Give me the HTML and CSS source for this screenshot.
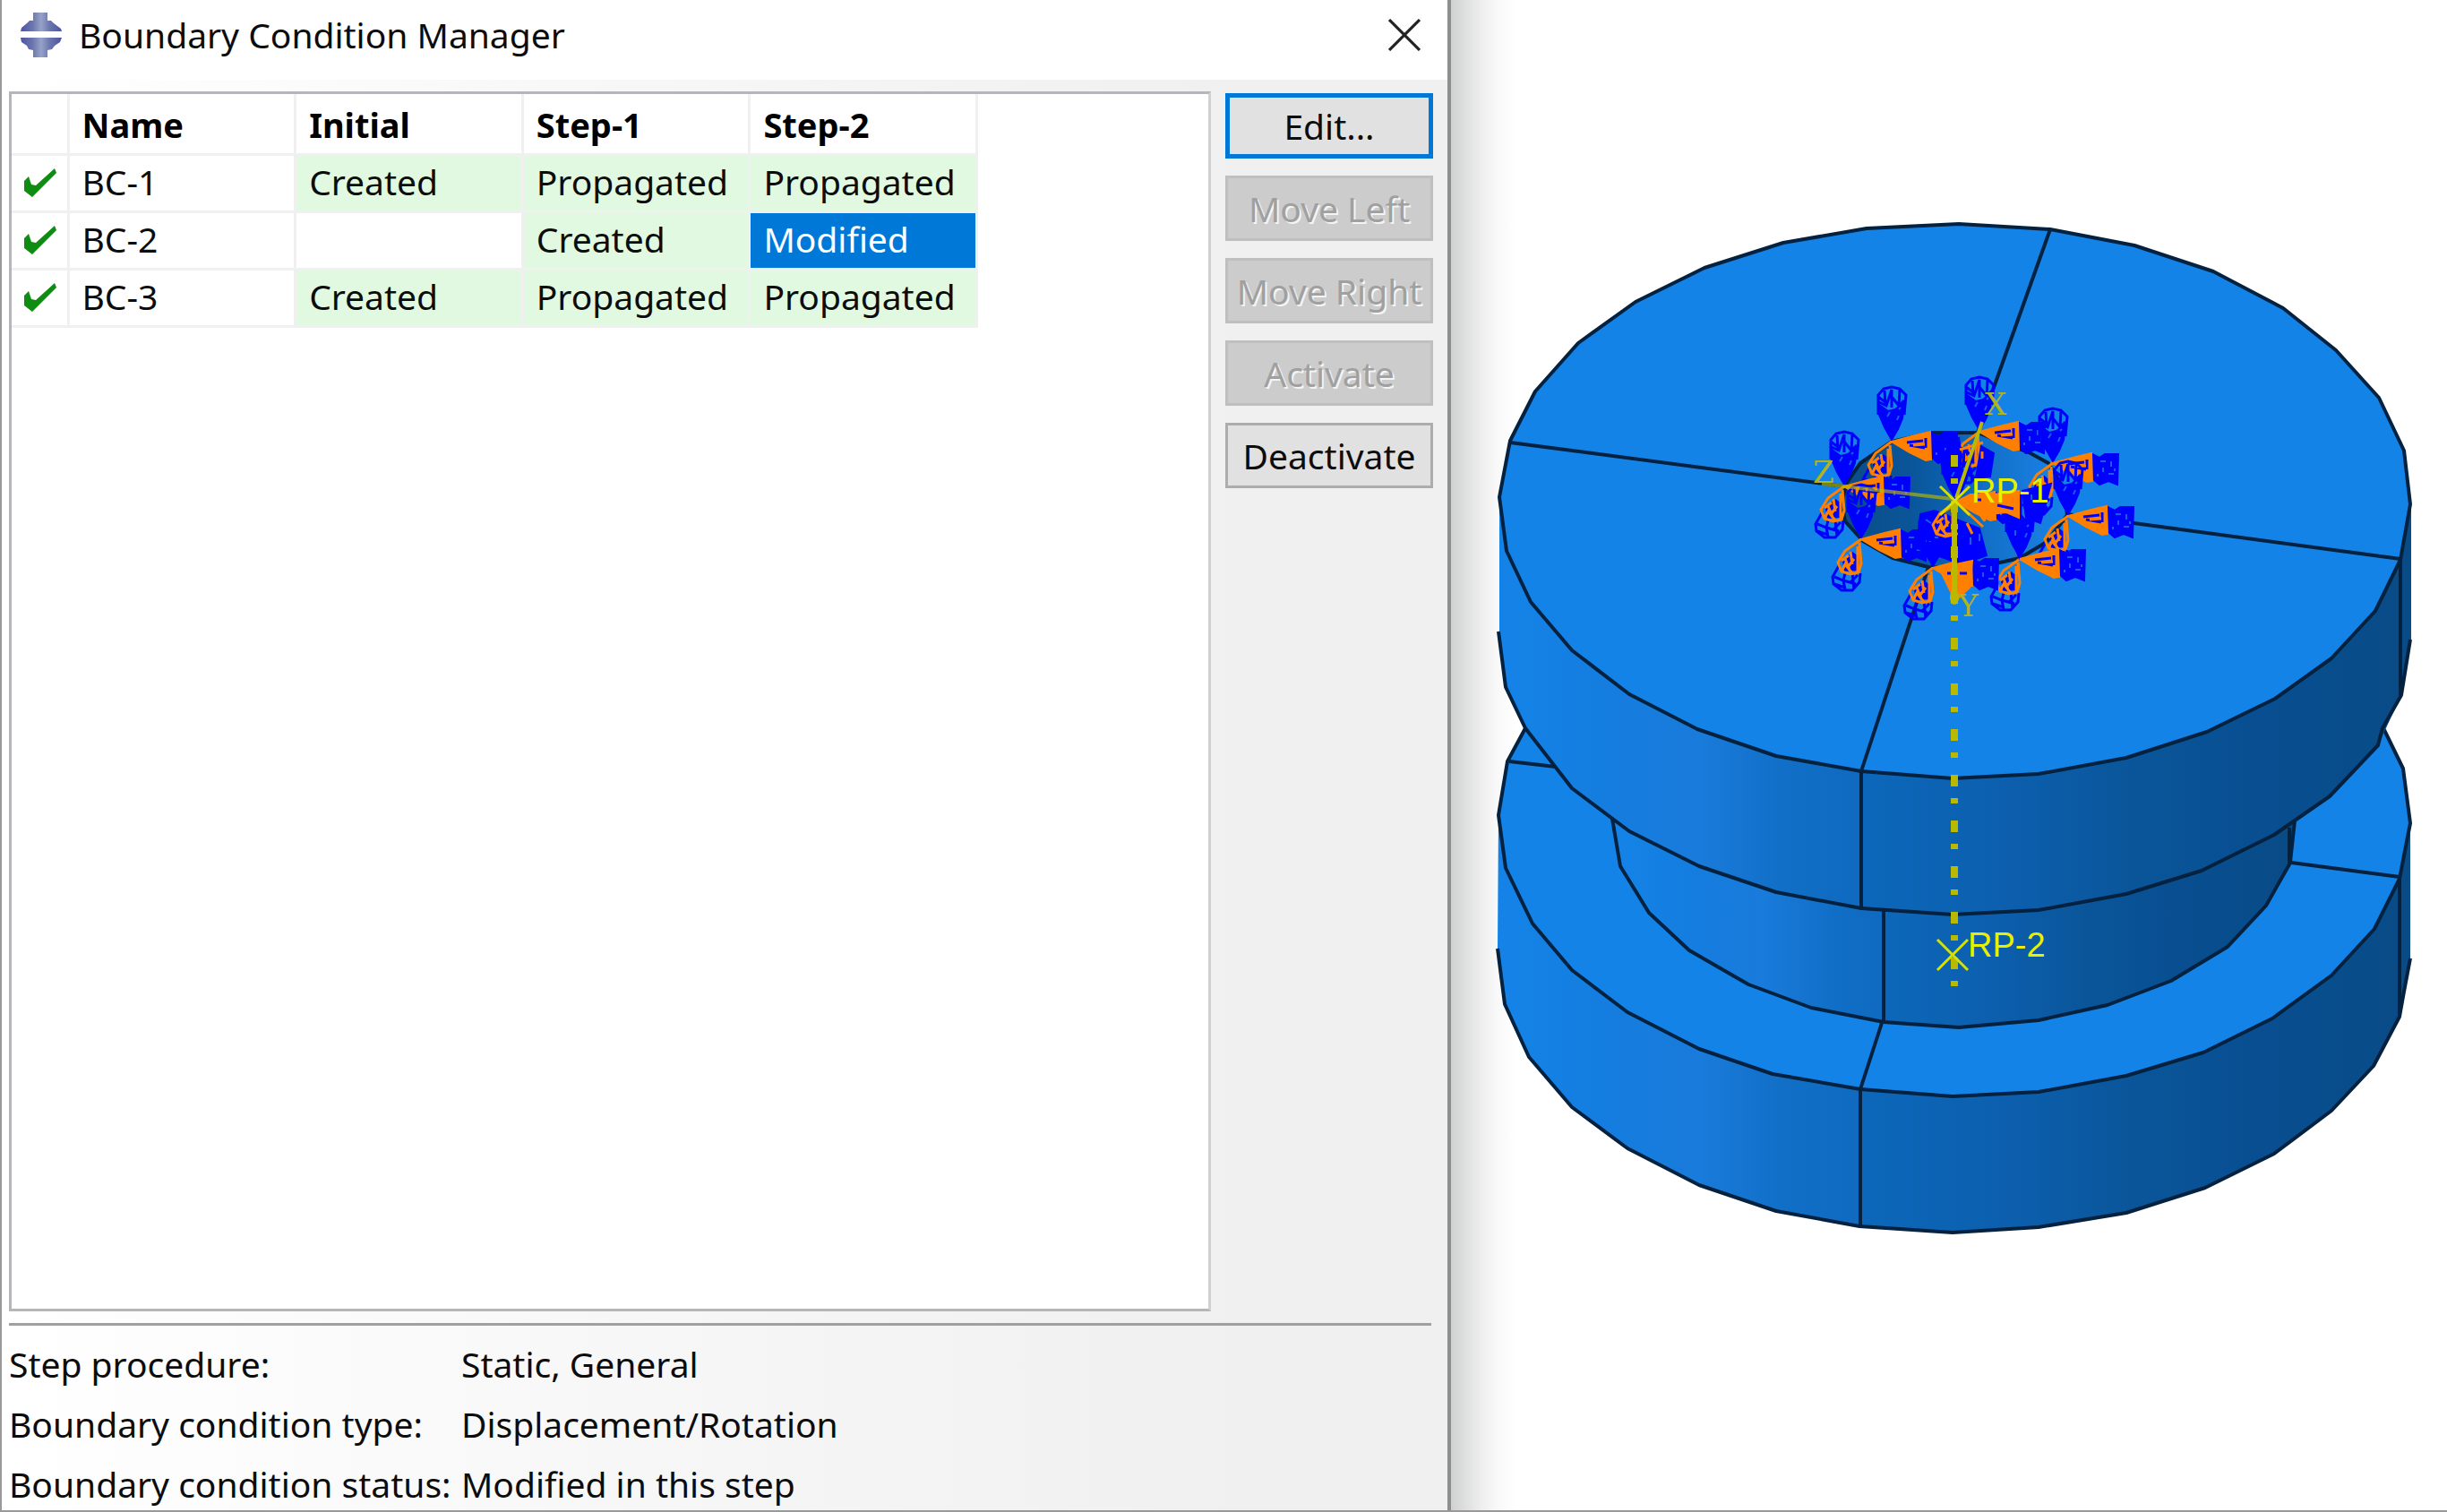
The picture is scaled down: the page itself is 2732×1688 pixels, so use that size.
FILE: index.html
```html
<!DOCTYPE html>
<html lang="en">
<head>
<meta charset="utf-8">
<title>Boundary Condition Manager</title>
<link rel="stylesheet" href="styles.css">
</head>
<body>
<main class="workspace">
  <section class="dialog" aria-labelledby="dialog-title">
    <header class="titlebar">
      <svg class="app-icon" viewBox="0 0 48 52" aria-hidden="true">
        <defs>
          <linearGradient id="icon-fill" x1="0" x2="1" y1="0" y2="0">
            <stop offset="0" stop-color="#4c54a0"/><stop offset=".3" stop-color="#6c77b0"/><stop offset=".5" stop-color="#97a2c8"/><stop offset=".7" stop-color="#6c77b0"/><stop offset="1" stop-color="#4c54a0"/>
          </linearGradient>
        </defs>
        <path fill="url(#icon-fill)" d="M1 22 2 18 8 13 11 10H15V1H31V10H35L38 13 46 19 47 22ZM1 29H47L45 34 39 38 36 42 31 43V51H15V43L10 42 8 38 2 34Z"/>
      </svg>
      <h1 class="title" id="dialog-title">Boundary Condition Manager</h1>
      <button class="close" type="button" aria-label="Close">
        <svg class="close-icon" viewBox="0 0 34 34" aria-hidden="true"><path d="M1 1 33 33M33 1 1 33"/></svg>
      </button>
    </header>

    <div class="content">
      <div class="list">
        <table class="grid">
          <colgroup><col class="col-check"><col class="col-data"><col class="col-data"><col class="col-data"><col class="col-data"></colgroup>
          <thead>
            <tr><th></th><th scope="col">Name</th><th scope="col">Initial</th><th scope="col">Step-1</th><th scope="col">Step-2</th></tr>
          </thead>
          <tbody>
            <tr>
              <td class="state"><svg class="check" viewBox="0 0 36 32" role="img" aria-label="Active"><path d="M0 14 5 9 8 18 13 19 34 0 36 5 9 32 0 25Z"/></svg></td>
              <td>BC-1</td><td class="set">Created</td><td class="set">Propagated</td><td class="set">Propagated</td>
            </tr>
            <tr>
              <td class="state"><svg class="check" viewBox="0 0 36 32" role="img" aria-label="Active"><path d="M0 14 5 9 8 18 13 19 34 0 36 5 9 32 0 25Z"/></svg></td>
              <td>BC-2</td><td></td><td class="set">Created</td><td class="selected">Modified</td>
            </tr>
            <tr>
              <td class="state"><svg class="check" viewBox="0 0 36 32" role="img" aria-label="Active"><path d="M0 14 5 9 8 18 13 19 34 0 36 5 9 32 0 25Z"/></svg></td>
              <td>BC-3</td><td class="set">Created</td><td class="set">Propagated</td><td class="set">Propagated</td>
            </tr>
          </tbody>
        </table>
      </div>
      <div class="actions">
        <button class="action primary" type="button">Edit...</button>
        <button class="action" type="button" disabled>Move Left</button>
        <button class="action" type="button" disabled>Move Right</button>
        <button class="action" type="button" disabled>Activate</button>
        <button class="action" type="button">Deactivate</button>
      </div>
    </div>

    <dl class="details">
      <dt>Step procedure:</dt><dd>Static, General</dd>
      <dt>Boundary condition type:</dt><dd>Displacement/Rotation</dd>
      <dt>Boundary condition status:</dt><dd>Modified in this step</dd>
    </dl>
  </section>

  <section class="viewport" aria-label="Model viewport">
    <svg class="model" viewBox="1620 0 1112 1680" role="img" aria-label="Flanged cylinder with boundary conditions">
      <defs>
        <linearGradient id="side" gradientUnits="userSpaceOnUse" x1="1672" x2="2692" y1="0" y2="0">
          <stop offset="0" stop-color="#1483e8"/><stop offset=".12" stop-color="#147ddf"/><stop offset=".22" stop-color="#197bdb"/><stop offset=".31" stop-color="#116fc7"/><stop offset=".397" stop-color="#0f6ac0"/><stop offset=".4" stop-color="#0c67ba"/><stop offset=".56" stop-color="#0c5fae"/><stop offset=".7" stop-color="#0a5599"/><stop offset=".82" stop-color="#084f92"/><stop offset="1" stop-color="#084b86"/>
        </linearGradient>
        <linearGradient id="neck" gradientUnits="userSpaceOnUse" x1="1800" x2="2562" y1="0" y2="0">
          <stop offset="0" stop-color="#1483e8"/><stop offset=".12" stop-color="#147ddf"/><stop offset=".22" stop-color="#197bdb"/><stop offset=".32" stop-color="#116fc7"/><stop offset=".397" stop-color="#0f6ac0"/><stop offset=".4" stop-color="#0c67ba"/><stop offset=".56" stop-color="#0c5fae"/><stop offset=".7" stop-color="#0a5599"/><stop offset=".82" stop-color="#084f92"/><stop offset="1" stop-color="#084b86"/>
        </linearGradient>
        <linearGradient id="bore" gradientUnits="userSpaceOnUse" x1="2056" x2="2308" y1="0" y2="0">
          <stop offset="0" stop-color="#0a4c88"/><stop offset=".3" stop-color="#0a5599"/><stop offset=".5" stop-color="#0c62b2"/><stop offset=".65" stop-color="#1270c8"/><stop offset=".85" stop-color="#187bdb"/><stop offset="1" stop-color="#1483e8"/>
        </linearGradient>
        <!-- translation cone, wireframe body pointing at its node -->
        <g id="up">
          <path class="blue-fill" d="M0 -2-8 -16-14 -30-15 -42-4 -34 4 -36 14 -44 12 -26 7 -14Z"/>
          <path class="blue-line" d="M-15 -30V-52L-9 -59 0 -61 9 -59 16 -52 14 -30M-14 -44-6 -40 0 -58V-38M0 -50 8 -40 14 -46M-8 -57-7 -42M-15 -50-7 -44M9 -58 8 -40"/>
          <path class="gap-line" d="M-5 -28-2 -33M6 -24 8 -29M8 -36 10 -38"/>
        </g>
        <g id="side-cone">
          <path class="blue-fill" d="M44 -10 52 -6 58 -10H73L72 24 62 20 52 24 44 17Z"/>
          <path class="gap-line" d="M53 -2H59M56 5V10M65 -2V4M62 12H68M50 12V15M69 6V9"/>
          <path class="orange-fill" d="M0 0 26 -7 43 -11 44 20 38 21 20 12Z"/>
          <path class="blue-line" d="M17 1 35 -1M20 4 37 7M28 4 37 5M38 -4V7"/>
          <path class="orange-line" d="M24 4 37 3"/>
        </g>
        <g id="down-cone">
          <path class="blue-line" d="M-24 28-32 42-31 50-22 57-10 57-2 48-1 38M-30 42-20 46-18 56M-20 46-6 50M-18 38-20 46M-10 38-8 56M-30 50-18 54M-4 40-12 48"/>
          <path class="blue-fill" d="M-20 25-10 15-6 18V34L-18 35Z"/>
          <path class="orange-line" d="M0 0-18 13-26 26-22 36-12 39-3 37 0 27-2 4M-4 8V36M-12 14-10 28M-18 22-13 34M-22 24-14 18M-10 38-18 28-22 36M-14 30-8 22"/>
        </g>
        <g id="bc"><use href="#up"/><use href="#side-cone"/><use href="#down-cone"/></g>
      </defs>

      <!-- lower flange -->
      <path fill="url(#side)" d="M1673 910 1672 1059 1680 1121 1707 1180 1755 1236 1817 1282 1897 1323 1983 1352 2076 1369 2180 1376 2276 1370 2374 1354 2462 1326 2539 1288 2603 1240 2650 1190 2679 1135 2684 1107 2691 1070V919Z"/>
      <path class="line" d="M1672 1059 1680 1121 1707 1180 1755 1236 1817 1282 1897 1323 1983 1352 2076 1369 2180 1376 2276 1370 2374 1354 2462 1326 2539 1288 2603 1240 2650 1190 2679 1135 2684 1107 2691 1070"/>
      <path class="line face" d="M1703 813 1683 850 1673 910 1681 969 1711 1031 1755 1083 1817 1130 1897 1171 1979 1199 2077 1216 2180 1224 2276 1219 2374 1201 2460 1175 2537 1137 2603 1089 2651 1037 2679 981 2691 919 2683 858 2662 815Z"/>
      <path class="line" d="M2679 981V1135M2077 1216V1369M2101 1142 2077 1216M1685 850 1737 856M2558 963 2679 979"/>
      <!-- neck -->
      <path fill="url(#neck)" d="M1800 900V914L1809 967 1841 1019 1886 1061 1952 1099 2022 1125 2103 1141 2187 1147 2276 1139 2353 1122 2424 1095 2487 1057 2530 1011 2556 965 2562 900Z"/>
      <path class="line" d="M1800 914 1809 967 1841 1019 1886 1061 1952 1099 2022 1125 2103 1141 2187 1147 2276 1139 2353 1122 2424 1095 2487 1057 2530 1011 2556 965V924M2562 916 2557 962M2103 1016V1141"/>
      <!-- upper flange -->
      <path fill="url(#side)" d="M1674 555V705L1681 767 1703 813 1755 880 1819 928 1897 967 1983 996 2078 1014 2180 1021 2276 1016 2374 998 2458 972 2539 932 2601 889 2655 832 2681 776 2692 714V563Z"/>
      <path class="line" d="M1673 705 1681 767 1703 813 1755 880 1819 928 1897 967 1983 996 2078 1014 2180 1021 2276 1016 2374 998 2458 972 2539 932 2601 889 2655 832 2660 813 2681 776 2691 714M2680 625V776M2078 861V1014"/>
      <path class="line face" d="M2187 250 2084 255 1991 271 1903 299 1826 337 1762 383 1714 437 1686 492 1674 555 1682 615 1709 672 1755 726 1819 775 1895 814 1983 844 2078 861 2180 869 2276 864 2374 846 2464 817 2540 780 2603 735 2652 682 2680 625 2691 563 2684 503 2656 444 2608 391 2549 344 2471 303 2383 274 2289 256Z"/>
      <path class="line" d="M2289 256 2208 483M1686 494 2059 543M2308 574 2680 624M2078 861 2153 633"/>
      <path class="line bore" d="M2157 483H2208L2267 506 2287 517 2304 545 2308 575 2285 605 2255 623 2233 628 2193 635 2153 633 2113 623 2080 604 2060 582 2056 560 2063 537 2077 517 2112 493Z"/>

      <!-- boundary condition glyphs on the bore edge -->
      <use href="#bc" x="2210" y="482"/>
      <use href="#bc" x="2112" y="493"/>
      <use href="#bc" x="2292" y="517"/>
      <use href="#bc" x="2059" y="543"/>
      <use href="#bc" x="2309" y="576"/>
      <use href="#bc" x="2078" y="602"/>
      <use href="#bc" x="2255" y="624"/>
      <use href="#bc" x="2158" y="634"/>
      <path class="blue-fill" d="M2158 486 2187 489 2190 510 2184 556 2170 530 2166 510ZM2212 498 2226 506 2222 532 2206 534ZM2144 574 2160 570 2210 590 2218 620 2190 630 2140 612ZM2258 548 2290 540 2278 584 2262 578ZM2240 585 2262 580 2254 622Z"/>
      <path class="gap-line" d="M2150 580 2156 584M2160 600H2166M2172 592 2176 598M2200 600V608M2210 596V604M2150 604H2156M2176 614 2182 612M2268 552V558M2250 592V598M2172 500V506"/>
      <use href="#bc" x="2184" y="560"/>
      <path class="orange-fill" d="M2184 560 2200 552 2226 552 2254 548 2254 578 2240 572 2222 574 2214 580 2206 568 2194 566Z"/>
      <path class="blue-line" d="M2230 564 2248 568M2206 558H2212"/>
      <path class="orange-line" d="M2186 560 2222 548M2190 566 2214 588M2208 560 2216 582M2196 584 2202 596M2172 596H2186M2180 565 2166 574M2206 508V516M2213 504V512M2214 494 2188 502"/>
      <path class="orange-fill" d="M2165 634 2202 626 2199 656 2183 671Z"/>
      <path class="blue-line" d="M2174 640H2180M2188 640H2196"/>

      <!-- local axes, centre line and reference points -->
      <path class="centre" d="M2182 508V1101"/>
      <path class="axis faded" d="M2034 540 2180 557"/>
      <path class="axis thin" d="M2184 556 2213 471"/>
      <path class="axis" d="M2182 560V666"/>
      <ellipse class="dot" cx="2182" cy="667" rx="5" ry="8"/>
      <path class="cross" d="M2166 543 2199 575M2199 543 2166 575M2163 1049 2197 1083M2197 1049 2163 1083"/>
      <text class="axis-name" x="2216" y="463">X</text>
      <text class="axis-name" x="2024" y="539">Z</text>
      <text class="axis-name" x="2186" y="688">Y</text>
      <text class="point-name" x="2201" y="561">RP-1</text>
      <text class="point-name" x="2197" y="1068">RP-2</text>
    </svg>
  </section>
</main>
</body>
</html>
```
FILE: styles.css
```css
* {
  box-sizing: border-box;
}

body {
  margin: 0;
  background: #fff;
  color: #0c0c0c;
  font: 39px/48px "Noto Sans", "Noto Sans CJK SC", sans-serif;
}

.workspace {
  display: grid;
  grid-template-columns: 1620fr 1112fr;
  min-height: 100vh;
  border-bottom: 2px solid #999;
}

/* Dialog window */

.dialog {
  display: flex;
  flex-direction: column;
  border-left: 2px solid #999;
  border-right: 4px solid #8e8e8e;
  background: linear-gradient(90deg, #fff, #f4f4f4 60%, #f0f0f0 85%);
}

.titlebar {
  display: flex;
  align-items: center;
  height: 89px;
  padding: 0 30px 12px 20px;
  background: #fff;
}

.app-icon {
  width: 48px;
  height: 52px;
}

.title {
  flex: 1;
  margin: 0 0 0 18px;
  font-size: 39px;
  font-weight: 400;
}

.close {
  display: flex;
  padding: 0;
  border: 0;
  background: none;
}

.close-icon {
  width: 36px;
  height: 36px;
  fill: none;
  stroke: #222;
  stroke-width: 3;
}

.content {
  flex: 1;
  display: grid;
  grid-template-columns: 1fr 232px;
  gap: 16px;
  padding: 13px 16px 0 8px;
}

.list {
  border: 3px solid #b4b6b9;
  border-right-color: #cfd1d3;
  background: #fff;
}

.grid {
  width: 1079px;
  table-layout: fixed;
  border-collapse: collapse;
}

.col-check {
  width: 63px;
}

th,
td {
  height: 64px;
  padding: 0 0 2px 14px;
  border-right: 3px solid #f0f0f0;
  border-bottom: 3px solid #f0f0f0;
  text-align: left;
  white-space: nowrap;
}

th {
  height: 67px;
  padding-top: 4px;
  font-size: 38px;
  font-weight: 700;
  color: #000;
}

.state {
  padding: 0 0 0 14px;
}

.check {
  display: block;
  width: 36px;
  height: 32px;
  fill: #0f8c12;
}

.set {
  background: #e1f9e1;
}

.selected {
  background: #0078d7;
  color: #fff;
}

.actions {
  display: flex;
  flex-direction: column;
  gap: 19px;
  padding-top: 2px;
}

.action {
  height: 73px;
  padding: 0;
  border: 3px solid #adadad;
  background: #e1e1e1;
  color: inherit;
  font: inherit;
  white-space: nowrap;
}

.action.primary {
  border: 5px solid #0078d7;
}

.action:disabled {
  border-color: #bfbfbf;
  background: #ccc;
  color: #a0a0a0;
  text-shadow: 2px 2px 0 #f4f4f4;
}

/* Step details */

.details {
  display: grid;
  grid-template-columns: 505px 1fr;
  row-gap: 19px;
  margin: 13px 18px 0 8px;
  padding: 19px 0 5px;
  border-top: 3px solid #a0a0a0;
  white-space: nowrap;
}

.details dd {
  margin: 0;
}

/* 3D viewport */

.viewport {
  background: linear-gradient(90deg, #cfd0d0, #e0e1e1 18px, #eee 34px, #f8f8f8 50px, #fff 72px);
}

.model {
  display: block;
  width: 100%;
  height: auto;
}

.line {
  fill: none;
  stroke: #04223f;
  stroke-width: 4;
  stroke-linejoin: round;
}

.face {
  fill: #1483e8;
}

.bore {
  fill: url(#bore);
}

.blue-fill {
  fill: #00f;
  stroke: #00f;
  stroke-width: 2;
}

.blue-line {
  fill: none;
  stroke: #00f;
  stroke-width: 3;
}

.gap-line {
  fill: none;
  stroke: #1a5cf0;
  stroke-width: 2;
}

.orange-fill {
  fill: #ff8000;
  stroke: #ff8000;
  stroke-width: 2;
}

.orange-line {
  fill: none;
  stroke: #ff8000;
  stroke-width: 3;
}

.centre {
  stroke: #b9b900;
  stroke-width: 8;
  stroke-dasharray: 13 13 6 19;
}

.axis {
  stroke: #b9b900;
  stroke-width: 6;
}

.axis.thin {
  stroke-width: 4;
}

.axis.faded {
  stroke-width: 4;
  opacity: .65;
}

.dot {
  fill: #b9b900;
}

.cross {
  stroke: #d8e000;
  stroke-width: 3;
}

.axis-name {
  fill: #b0b41c;
  font: 34px "DejaVu Serif", serif;
}

.point-name {
  fill: #e6f000;
  font: 38px "Liberation Sans", sans-serif;
}
```
